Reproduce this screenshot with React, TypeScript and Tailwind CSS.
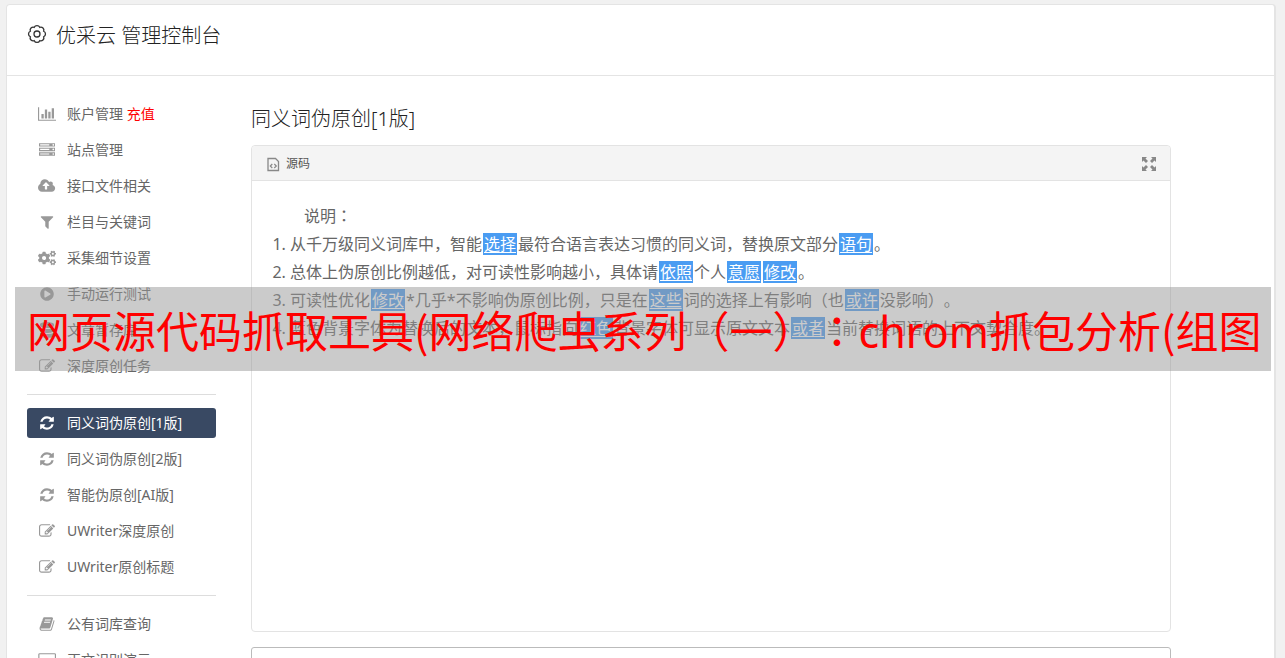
import { FaCogs, FaDatabase, FaPlayCircle } from "react-icons/fa";

const ICONS = {
  chart: {
    viewBox: "0 0 2048 1792",
    d: "M640 896v512h-256v-512h256zm384-512v1024h-256v-1024h256zm1024 1152v128h-2048v-1536h128v1408h1920zm-640-896v768h-256v-768h256zm384-384v1152h-256v-1152h256z",
  },
  server: {
    viewBox: "0 0 1792 1792",
    d: "M128 1408h1024v-128h-1024v128zm0-512h1024v-128h-1024v128zm1568 448q0-40-28-68t-68-28-68 28-28 68 28 68 68 28 68-28 28-68zm-1568-960h1024v-128h-1024v128zm1568 448q0-40-28-68t-68-28-68 28-28 68 28 68 68 28 68-28 28-68zm0-512q0-40-28-68t-68-28-68 28-28 68 28 68 68 28 68-28 28-68zm96 832v384h-1792v-384h1792zm0-512v384h-1792v-384h1792zm0-512v384h-1792v-384h1792z",
  },
  cloud: {
    viewBox: "-64 0 2048 1792",
    d: "M1216 864q0-14-9-23l-352-352q-9-9-23-9t-23 9l-351 351q-10 12-10 24 0 14 9 23t23 9h224v352q0 13 9.5 22.5t22.5 9.5h192q13 0 22.5-9.5t9.5-22.5v-352h224q13 0 22.5-9.5t9.5-22.5zm640 288q0 159-112.5 271.5t-271.5 112.5h-1088q-185 0-316.5-131.5t-131.5-316.5q0-130 70-240t188-165q-2-30-2-43 0-212 150-362t362-150q156 0 285.5 87t188.5 231q71-62 166-62 106 0 181 75t75 181q0 76-41 138 130 31 213.5 135.5t83.5 238.5z",
  },
  filter: {
    viewBox: "0 0 1792 1792",
    d: "M1595 295q17 41-14 70l-493 493v742q0 42-39 59-13 5-25 5-27 0-45-19l-256-256q-19-19-19-45v-486l-493-493q-31-29-14-70 17-39 59-39h1280q42 0 59 39z",
  },
  edit: {
    viewBox: "0 0 1792 1792",
    d: "M888 1184l116-116-152-152-116 116v56h96v96h56zm440-720q-16-16-33 1l-350 350q-17 17-1 33t33-1l350-350q17-17 1-33zm80 594v190q0 119-84.5 203.5t-203.5 84.5h-832q-119 0-203.5-84.5t-84.5-203.5v-832q0-119 84.5-203.5t203.5-84.5h832q63 0 117 25 15 7 18 23 3 17-9 29l-49 49q-14 14-32 8-23-6-45-6h-832q-66 0-113 47t-47 113v832q0 66 47 113t113 47h832q66 0 113-47t47-113v-126q0-13 9-22l64-64q15-15 35-7t20 29zm-96-738l288 288-672 672h-288v-288zm444 132l-92 92-288-288 92-92q28-28 68-28t68 28l152 152q28 28 28 68t-28 68z",
  },
  refresh: {
    viewBox: "0 0 1792 1792",
    d: "M1639 1056q0 5-1 7-64 268-268 434.5t-478 166.5q-146 0-282.5-55t-243.5-157l-129 129q-19 19-45 19t-45-19-19-45v-448q0-26 19-45t45-19h448q26 0 45 19t19 45-19 45l-137 137q71 66 161 102t187 36q134 0 250-65t186-179q11-17 53-117 8-23 30-23h192q13 0 22.5 9.5t9.5 22.5zm25-800v448q0 26-19 45t-45 19h-448q-26 0-45-19t-19-45 19-45l138-138q-148-137-349-137-134 0-250 65t-186 179q-11 17-53 117-8 23-30 23h-199q-13 0-22.5-9.5t-9.5-22.5v-7q65-268 270-434.5t480-166.5q146 0 284 55.5t245 156.5l130-129q19-19 45-19t45 19 19 45z",
  },
  book: {
    viewBox: "0 0 1792 1792",
    d: "M1703 478q40 57 18 129l-275 906q-19 64-76.5 107.5t-122.5 43.5h-923q-77 0-148.5-53.5t-99.5-131.5q-24-67-2-127 0-4 3-27t4-37q1-8-3-21.5t-3-19.5q2-11 8-21t16.5-23.5 16.5-23.5q23-38 45-91.5t30-91.5q3-10 .5-30t-.5-28q3-11 17-28t17-23q21-36 42-92t25-90q1-9-2.5-32t.5-28q4-13 22-30.5t22-22.5q19-26 42.5-84.5t27.5-96.5q1-8-3-25.5t-2-26.5q2-8 9-18t18-23 17-21q8-12 16.5-30.5t15-35 16-36 19.5-32 26.5-23.5 36-11.5 47.5 5.5l-1 3q38-9 51-9h761q74 0 114 56t18 130l-274 906q-36 119-71.5 153.5t-128.5 34.5h-869q-27 0-38 15-11 16-1 43 24 70 144 70h923q29 0 56-15.5t35-41.5l300-987q7-22 5-57 38 15 59 43zm-1064 2q-4 13 2 22.5t20 9.5h608q13 0 25.5-9.5t16.5-22.5l21-64q4-13-2-22.5t-20-9.5h-608q-13 0-25.5 9.5t-16.5 22.5zm-83 256q-4 13 2 22.5t20 9.5h608q13 0 25.5-9.5t16.5-22.5l21-64q4-13-2-22.5t-20-9.5h-608q-13 0-25.5 9.5t-16.5 22.5z",
  },
  laptop: {
    viewBox: "0 0 2048 1792",
    d: "M192 1280q-66 0-113-47t-47-113v-832q0-66 47-113t113-47h1664q66 0 113 47t47 113v832q0 66-47 113t-113 47zm-32-992v832q0 32 32 32h1664q32 0 32-32v-832q0-32-32-32h-1664q-32 0-32 32zm544 1120h640v128h-640z",
  },
};

type IconName = keyof typeof ICONS;

function Icon({ name }: { name: IconName }) {
  const icon = ICONS[name];
  return (
    <svg viewBox={icon.viewBox} className="h-4 w-auto" fill="currentColor" aria-hidden="true">
      <path d={icon.d} />
    </svg>
  );
}

type MenuItem = {
  label: string;
  icon: React.ReactNode;
  extra?: string;
  active?: boolean;
};

const menuGroups: MenuItem[][] = [
  [
    { label: "账户管理", icon: <Icon name="chart" />, extra: "充值" },
    { label: "站点管理", icon: <Icon name="server" /> },
    { label: "接口文件相关", icon: <Icon name="cloud" /> },
    { label: "栏目与关键词", icon: <Icon name="filter" /> },
    { label: "采集细节设置", icon: <FaCogs size={18} /> },
    { label: "手动运行测试", icon: <FaPlayCircle size={14} /> },
    { label: "文章暂存库", icon: <FaDatabase size={16} /> },
    { label: "深度原创任务", icon: <Icon name="edit" /> },
  ],
  [
    { label: "同义词伪原创[1版]", icon: <Icon name="refresh" />, active: true },
    { label: "同义词伪原创[2版]", icon: <Icon name="refresh" /> },
    { label: "智能伪原创[AI版]", icon: <Icon name="refresh" /> },
    { label: "UWriter深度原创", icon: <Icon name="edit" /> },
    { label: "UWriter原创标题", icon: <Icon name="edit" /> },
  ],
  [
    { label: "公有词库查询", icon: <Icon name="book" /> },
    { label: "正文识别演示", icon: <Icon name="laptop" /> },
  ],
];

function Word({ children }: { children: React.ReactNode }) {
  return (
    <span className="mx-px bg-[#4a9cf2] px-px text-white underline underline-offset-2">
      {children}
    </span>
  );
}

function Sidebar() {
  return (
    <nav className="w-[189px] shrink-0 text-sm">
      {menuGroups.map((group, i) => (
        <div key={i}>
          {i > 0 && <hr className="my-[13px] border-[#ddd]" />}
          <ul className="flex flex-col gap-1.5">
            {group.map((item) => (
              <li key={item.label}>
                <a
                  href="#"
                  className={`flex h-[30px] items-center rounded-[3px] ${
                    item.active ? "bg-[#394963] text-white" : "text-[#666]"
                  }`}
                >
                  <span
                    className={`flex w-10 justify-center ${
                      item.active ? "text-white" : "text-[#999]"
                    }`}
                  >
                    {item.icon}
                  </span>
                  <span>
                    {item.label}
                    {item.extra && <span className="text-[#f00]"> {item.extra}</span>}
                  </span>
                </a>
              </li>
            ))}
          </ul>
        </div>
      ))}
    </nav>
  );
}

function Editor() {
  return (
    <section className="flex h-[487px] flex-col rounded border border-[#e3e3e3]">
      <div className="flex h-[35px] shrink-0 items-center justify-between rounded-t border-b border-[#e3e3e3] bg-[#f4f4f4] px-3.5 pt-0.5">
        <button type="button" className="flex items-center gap-1.5 text-xs text-[#555]">
          <svg viewBox="0 0 14 16" className="h-4 w-3.5" fill="none" stroke="#888" aria-hidden="true">
            <path strokeWidth="1.300" d="M2 2.500h7.500l3 3v9h-10.500z" />
            <path strokeWidth="1.200" d="M6.300 8l-2 2 2 2M8.300 8l2 2-2 2" />
          </svg>
          源码
        </button>
        <button type="button" aria-label="全屏">
          <svg viewBox="0 0 14 14" className="size-3.5" fill="#888" aria-hidden="true">
            <path d="M0 0h5L3.500 1.500 6 4 4 6 1.500 3.500 0 5zM14 0v5l-1.500-1.500L10 6 8 4l2.500-2.500L9 0zM0 14V9l1.500 1.500L4 8l2 2-2.500 2.500L5 14zM14 14H9l1.500-1.500L8 10l2-2 2.500 2.500L14 9z" />
          </svg>
        </button>
      </div>
      <div className="px-5 pt-5 text-base leading-7 text-[#666]">
        <p className="pl-8">
          说明<span className="font-['Noto_Sans_CJK_TC',sans-serif]">：</span>
        </p>
        <ol className="list-decimal pl-[18px]">
          <li>
            从千万级同义词库中，智能<Word>选择</Word>最符合语言表达习惯的同义词，替换原文部分<Word>语句</Word>。
          </li>
          <li>
            总体上伪原创比例越低，对可读性影响越小，具体请<Word>依照</Word>个人<Word>意愿</Word>
            <Word>修改</Word>。
          </li>
          <li>
            可读性优化<Word>修改</Word>*几乎*不影响伪原创比例，只是在<Word>这些</Word>词的选择上有影响（也<Word>或许</Word>没影响）。
          </li>
          <li>
            蓝色背景字体为替换后的文本，鼠标指向<Word>红色</Word>背景字体可显示原文文本<Word>或者</Word>当前替换词语的上下文契合度。
          </li>
        </ol>
      </div>
    </section>
  );
}

export default function App() {
  return (
    <div className="relative h-screen overflow-hidden bg-[#f1f1f1] pt-1 pr-[9px] pl-1.5 font-['Noto_Sans','Noto_Sans_CJK_SC',sans-serif] [text-spacing-trim:space-all]">
      <div className="min-h-screen rounded border border-r-2 border-[#e4e4e4] bg-white">
        <header className="flex h-[71px] items-start gap-[9px] border-b border-[#e4e4e4] px-5 pt-[17px]">
          <svg
            viewBox="0 0 20 20"
            className="mt-0.5 size-5"
            fill="none"
            stroke="#333"
            strokeWidth="1.300"
            aria-hidden="true"
          >
            <path d="M7.240 3.350a3 3 0 0 1 5.520 0a3 3 0 0 1 3.890 3.890a3 3 0 0 1 0 5.520a3 3 0 0 1-3.890 3.890a3 3 0 0 1-5.520 0a3 3 0 0 1-3.890-3.890a3 3 0 0 1 0-5.520a3 3 0 0 1 3.890-3.890z" />
            <circle cx="10" cy="10" r="3" />
          </svg>
          <h1 className="text-xl font-light text-[#222]">优采云 管理控制台</h1>
        </header>
        <div className="flex gap-[35px] pt-[23px] pl-5">
          <Sidebar />
          <main className="mr-[103px] min-w-0 flex-1">
            <h2 className="pt-1.5 pb-3 text-xl font-light text-[#222]">同义词伪原创[1版]</h2>
            <Editor />
            <textarea
              aria-label="原文"
              className="mt-[15px] block h-40 w-full resize-none rounded-[3px] border border-[#bbb]"
            />
          </main>
        </div>
      </div>

      <div className="absolute right-3.5 left-[15px] top-[287px] h-[84px] overflow-hidden bg-[#979797]/50 pl-3 font-['Noto_Sans_CJK_SC',sans-serif] text-[43px] leading-[84px] whitespace-nowrap text-[#f00]">
        <p>
          网页源代码抓取工具(网络爬虫系列（一）
          <span className="font-['Noto_Sans_CJK_TC',sans-serif]">：</span>
          <span className="font-['Noto_Sans',sans-serif]">chrom</span>
          抓包分析(组图
        </p>
      </div>
    </div>
  );
}
